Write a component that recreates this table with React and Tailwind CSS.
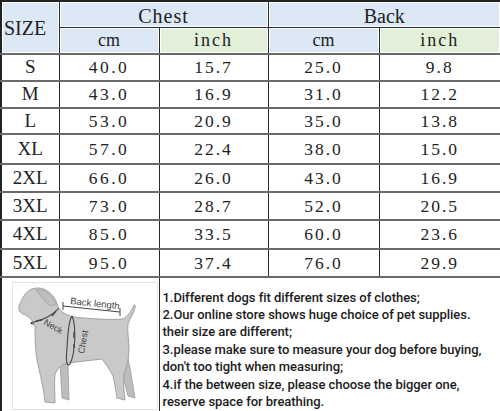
import React from "react";

const rows = [
  { size: "S", chestCm: "40.0", chestIn: "15.7", backCm: "25.0", backIn: "9.8", h: "h-[27px]" },
  { size: "M", chestCm: "43.0", chestIn: "16.9", backCm: "31.0", backIn: "12.2", h: "h-[27px]" },
  { size: "L", chestCm: "53.0", chestIn: "20.9", backCm: "35.0", backIn: "13.8", h: "h-[26px]" },
  { size: "XL", chestCm: "57.0", chestIn: "22.4", backCm: "38.0", backIn: "15.0", h: "h-[30px]" },
  { size: "2XL", chestCm: "66.0", chestIn: "26.0", backCm: "43.0", backIn: "16.9", h: "h-[28px]" },
  { size: "3XL", chestCm: "73.0", chestIn: "28.7", backCm: "52.0", backIn: "20.5", h: "h-[28px]" },
  { size: "4XL", chestCm: "85.0", chestIn: "33.5", backCm: "60.0", backIn: "23.6", h: "h-[29px]" },
  { size: "5XL", chestCm: "95.0", chestIn: "37.4", backCm: "76.0", backIn: "29.9", h: "h-[28px]" },
];

const notes = [
  "1.Different dogs fit different sizes of clothes;",
  "2.Our online store shows huge choice of pet supplies.",
  "their size are different;",
  "3.please make sure to measure your dog before buying,",
  "don't too tight when measuring;",
  "4.if the between size, please choose the bigger one,",
  "reserve space for breathing.",
];

// grey dog sketch with measuring marks
function DogDiagram() {
  return (
    <svg width="146" height="128" viewBox="0 0 146 128" className="block">
      <rect x="0.5" y="0.5" width="145" height="127" fill="#fff" stroke="#e4e4e4" />
      <g transform="translate(-10,-280)">
        {/* far legs */}
        <path
          d="M58 360 L60 396 L67 398 L66 362 Z M112 352 L120 370 L126 394 L133 396 L128 366 L124 348 Z"
          fill="#bdbdbd"
          stroke="#9a9a9a"
          strokeWidth="0.8"
        />
        {/* body */}
        <path
          d="M30 287 C24 289 20 296 17 304 C16 309 19 312 24 313 C28 316 31 319 33 324 C33 332 33 345 35 358 C38 372 42 388 43 400 L53 401 C53 392 52 380 53 372 C56 366 60 362 66 361 L100 357 C104 362 108 368 111 374 C113 382 114 390 115 396 L123 398 C122 390 121 380 122 372 C125 364 127 356 127 348 C127 338 125 330 126 322 C128 316 132 311 133 306 C134 302 132 302 131 305 C129 310 126 314 121 317 C110 318 90 317 72 315 C64 313 59 310 56 305 C55 300 52 294 47 290 C42 286 36 285 30 287 Z"
          fill="#c9c9c9"
          stroke="#9a9a9a"
          strokeWidth="0.9"
        />
        {/* ear */}
        <path d="M34 288 C42 287 50 292 54 302 C51 305 47 304 44 300 C41 296 37 292 34 288 Z" fill="#bfbfbf" stroke="#9a9a9a" strokeWidth="0.7" />
        {/* back length */}
        <path d="M61 304 L118 310 M61 300 L61 308 M118 306 L118 314" stroke="#444" strokeWidth="1" fill="none" />
        <text x="68" y="302" fontSize="9.5" fill="#444" fontFamily="Liberation Sans, sans-serif" transform="rotate(6 68 302)">
          Back length
        </text>
        {/* neck loop */}
        <path d="M57 306 C52 312 42 318 32 320 C28 320 28 322 32 322" stroke="#444" strokeWidth="1.1" fill="none" />
        <path d="M34 319 L40 318 M50 314 L54 309" stroke="#444" strokeWidth="1.3" fill="none" />
        <text x="41" y="322" fontSize="9" fill="#444" fontFamily="Liberation Sans, sans-serif" transform="rotate(30 41 322)">
          Neck
        </text>
        {/* chest loop */}
        <path d="M70 314 C74 322 74 350 68 362 C64 366 64 356 65 346 C66 332 66 320 70 314" stroke="#444" strokeWidth="1.1" fill="none" />
        <path d="M72 330 L72 336 M72 346 L72 342" stroke="#444" strokeWidth="1.4" fill="none" />
        <text x="82" y="352" fontSize="9" fill="#444" fontFamily="Liberation Sans, sans-serif" transform="rotate(-80 82 352)">
          Chest
        </text>
      </g>
    </svg>
  );
}

export default function App() {
  const head = "border border-[#2a2a2a] shadow-[inset_0_0_0_1px_#ffffff] font-normal";
  const cell = "border-x border-x-[#2a2a2a] border-y-2 border-y-[#6a6a6a] text-center p-0";

  return (
    <div className="w-[500px] h-[411px] bg-white overflow-hidden" style={{ fontFamily: "'Liberation Serif', 'Noto Sans CJK SC', serif" }}>
      <table className="w-[500px] table-fixed border-collapse border-2 border-[#222] text-[#222]">
        <colgroup>
          <col className="w-[58px]" />
          <col className="w-[100px]" />
          <col className="w-[109px]" />
          <col className="w-[111px]" />
          <col className="w-[122px]" />
        </colgroup>
        <thead>
          <tr className="h-[26px]">
            <th rowSpan={2} className={`${head} bg-[#dce8f5] text-[20px] text-left pl-[2px] pt-[2px]`}>SIZE</th>
            <th colSpan={2} className={`${head} bg-[#dce8f5] text-[20px] tracking-[1px] pt-[3px] leading-[22px]`}>Chest</th>
            <th colSpan={2} className={`${head} bg-[#dce8f5] text-[20px] pt-[3px] leading-[22px]`}>Back</th>
          </tr>
          <tr className="h-[26px] border-b-2 border-b-[#6a6a6a]">
            <th className={`${head} bg-[#dce8f5] text-[18px] leading-[22px]`}>cm</th>
            <th className={`${head} bg-[#e2efd9] text-[18px] tracking-[2px] leading-[22px]`}>inch</th>
            <th className={`${head} bg-[#dce8f5] text-[18px] leading-[22px]`}>cm</th>
            <th className={`${head} bg-[#e2efd9] text-[18px] tracking-[2px] leading-[22px]`}>inch</th>
          </tr>
        </thead>
        <tbody>
          {rows.map((r) => (
            <tr key={r.size} className={r.h}>
              <td className={`${cell} text-[19px] leading-[22px]`}>{r.size}</td>
              <td className={`${cell} text-[17.5px] tracking-[2.5px] leading-[22px]`}>{r.chestCm}</td>
              <td className={`${cell} text-[17.5px] tracking-[2px] leading-[22px]`}>{r.chestIn}</td>
              <td className={`${cell} text-[17.5px] tracking-[2px] leading-[22px]`}>{r.backCm}</td>
              <td className={`${cell} text-[17.5px] tracking-[2px] leading-[22px]`}>{r.backIn}</td>
            </tr>
          ))}
          <tr className="h-[136px]">
            <td colSpan={2} className="border border-[#2a2a2a] p-0 align-top">
              <div className="pl-[10px] pt-[4px]">
                <DogDiagram />
              </div>
            </td>
            <td colSpan={3} className="border border-[#2a2a2a] align-top pl-[3px] pt-[11px]">
              <div className="text-[13px] leading-[17.4px] font-medium text-[#1c1c1c] tracking-[-0.05px]" style={{ fontFamily: "Roboto, 'Liberation Sans', sans-serif" }}>
                {notes.map((n) => (
                  <div key={n} className="whitespace-nowrap">{n}</div>
                ))}
              </div>
            </td>
          </tr>
        </tbody>
      </table>
    </div>
  );
}
